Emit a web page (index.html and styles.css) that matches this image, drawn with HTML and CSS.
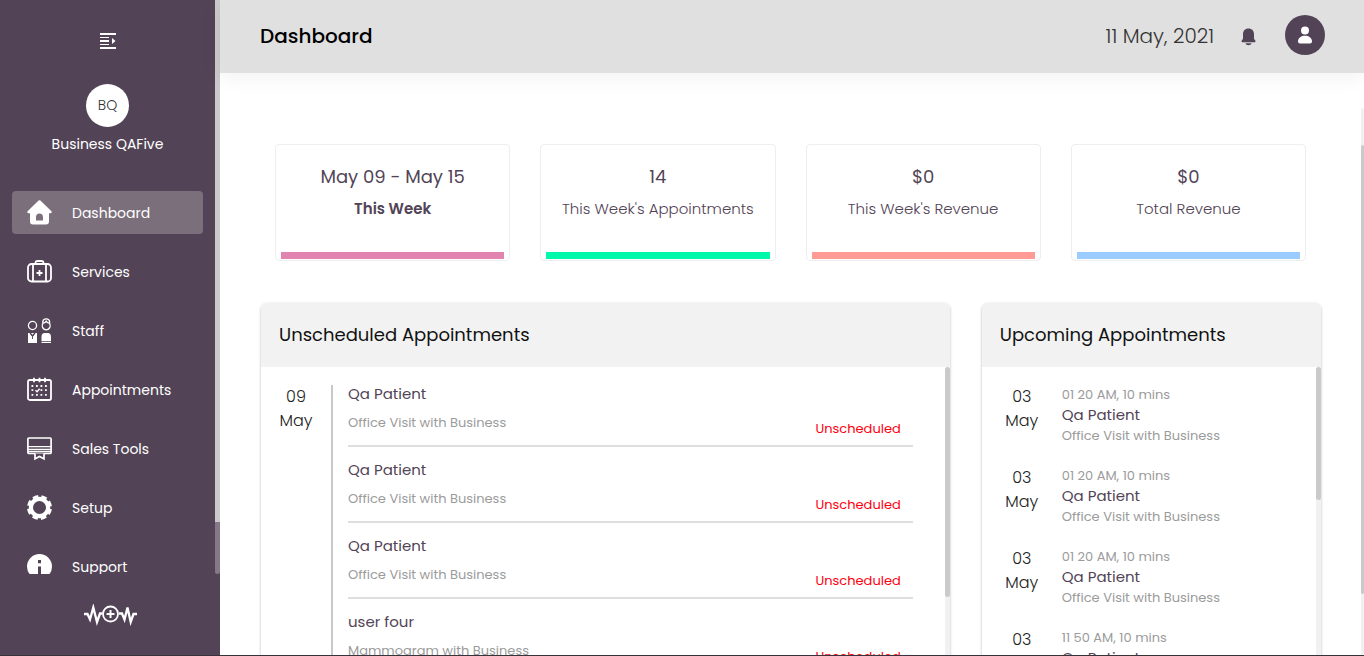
FILE: index.html
```html
<!DOCTYPE html>
<html lang="en">
<head>
<meta charset="utf-8">
<meta name="viewport" content="width=device-width, initial-scale=1">
<title>Dashboard</title>
<link rel="stylesheet" href="styles.css">
</head>
<body>
<div class="app">
  <aside class="sidebar">
    <div class="sidebar-scroll">
      <div class="sidebar-content">
        <button class="icon-button" type="button" aria-label="Toggle menu">
          <svg width="16" height="16" viewBox="0 0 16 16" fill="#fff"><path d="M0 0h16v2H0zM0 4h9v1H0zM0 7h9v2H0zM0 11h9v1H0zM0 14h16v2H0zM12 5l3.500 3L12 11z"/></svg>
        </button>
        <div class="initials">BQ</div>
        <div class="business">Business QAFive</div>
        <nav class="menu">
          <a class="menu-item active" href="#"><svg width="25" height="25" viewBox="0 0 25 25" fill="#fff"><path fill-rule="evenodd" d="M11.600.6q.9-.8 1.800 0l11 10.700q1 1.700-1 2H22v8.200q0 3-3 3H6q-3 0-3-3v-8.200H1.600q-2-.3-1-2zM9 20.500h7V17c0-4.600-7-4.600-7 0z"/></svg><span>Dashboard</span></a>
          <a class="menu-item" href="#"><svg width="25" height="25" viewBox="0 0 25 25" fill="none" stroke="#fff" stroke-width="1.800"><rect x="1" y="5" width="23" height="17.500" rx="3.500"/><path d="M6 5v17.500M19 5v17.500M8.500 5V4q0-2 2-2h4q2 0 2 2v1M12.500 11v6M9.500 14h6"/></svg><span>Services</span></a>
          <a class="menu-item" href="#"><svg width="25" height="25" viewBox="0 0 25 25" fill="none" stroke="#fff" stroke-width="1.300"><circle cx="5.500" cy="7.500" r="4.100"/><path d="M15.800 5.500V3.800Q16 .8 19.200.8t3.400 3v1.700q1 2 .4 3.500-1.200 2.800-3.800 2.800T15.400 9q-.6-1.500.4-3.500zM16 5.200q1.700.2 3.200-2 1.500 2.200 3.200 2"/><path fill="#fff" stroke="none" fill-rule="evenodd" d="M1 15h1.500l3 4 3-4H10v10H1zM4 15l1.500 1.700L7 15zM14.500 23.200V19q0-4 3.200-4h3q3.300 0 3.300 4v4.200zM14.500 24H24v1h-9.500z"/><path stroke="#524456" stroke-width=".9" d="M3 15l2.500 3.500L8 15M5.500 18.500V21"/></svg><span>Staff</span></a>
          <a class="menu-item" href="#"><svg width="25" height="25" viewBox="0 0 25 25" fill="none" stroke="#fff"><rect x="1" y="3" width="23" height="20" rx="1.800" stroke-width="1.800"/><path stroke-width="1.800" d="M7 .8v4.400M12.500.8v4.400M18 .8v4.400"/><path stroke-width="1.800" stroke-dasharray="1.800 2.700" d="M4.500 9H21M4.500 13.200H7M13.500 13.200H21M4.500 17.800H21"/><path stroke-width="1.400" d="M8.500 13.200l1.600 1.600 2.500-3"/></svg><span>Appointments</span></a>
          <a class="menu-item" href="#"><svg width="25" height="25" viewBox="0 0 25 25" fill="none" stroke="#fff" stroke-width="1.700"><rect x=".9" y="2" width="23.200" height="15.500" rx="1"/><path d="M1 10.700h23M1 13.300h23M1 15.500h23" stroke-width="1.300"/><path fill="#524456" d="M8 17.500v5.300l4.500-2.300 4.500 2.300v-5.300"/></svg><span>Sales Tools</span></a>
          <a class="menu-item" href="#"><svg width="25" height="25" viewBox="0 0 25 25" fill="none" stroke="#fff"><circle cx="12.500" cy="12.500" r="8.600" stroke-width="4.200"/><circle cx="12.500" cy="12.500" r="10.900" stroke-width="3.200" stroke-dasharray="5.400 3.161" stroke-dashoffset="-1.580"/></svg><span>Setup</span></a>
          <a class="menu-item" href="#"><svg width="25" height="25" viewBox="0 0 25 25"><circle cx="12.500" cy="12.500" r="12.500" fill="#fff"/><path fill="#524456" d="M11 6h3v3.200h-3zM11 12.500h3V20h-3z"/></svg><span>Support</span></a>
        </nav>
      </div>
      <div class="track track-side"><div class="thumb thumb-side"></div></div>
    </div>
    <div class="brand">
      <svg width="53" height="22" viewBox="0 0 53 22" fill="none" stroke="#fff"><path stroke-width="2.300" stroke-linejoin="miter" stroke-miterlimit="4" d="M0 10h3.500L6 15.500 9.300 3.500 13 18 16 9.500h2.500M35 9.500h3l2.500 6L43.500 3.500 46.700 18 49.500 10H53"/><circle cx="26.500" cy="10" r="7.500" stroke-width="1.800"/><path stroke-width="2" d="M26.500 6v8M22.500 10h8"/></svg>
    </div>
  </aside>
  <div class="page">
    <header class="topbar">
      <h1>Dashboard</h1>
      <time class="today" datetime="2021-05-11">11 May, 2021</time>
      <button class="icon-button bell" type="button" aria-label="Notifications">
        <svg width="15" height="18" viewBox="0 0 15 18" fill="#524456"><path d="M7.500.5c3.500 0 5.500 2.400 5.500 5.700v4.300c0 1 1.500 1.500 1.500 2.700 0 .8-.5 1-1 1h-12c-.5 0-1-.2-1-1C.5 12 2 11.500 2 10.500V6.200C2 2.900 4 .5 7.500.5zM4.300 15.300h6.400c-.8 2.600-5.600 2.600-6.400 0z"/></svg>
      </button>
      <button class="icon-button user" type="button" aria-label="Account">
        <svg width="14" height="18" viewBox="0 0 14 18" fill="#fff"><circle cx="7" cy="4.500" r="4"/><path d="M0 15.500C0 7.800 14 7.800 14 15.500q0 2-2 2H2q-2 0-2-2z"/></svg>
      </button>
    </header>
    <div class="body">
      <main class="content">
        <section class="cards">
          <article class="card"><h2>May 09 - May 15</h2><p class="strong">This Week</p><div class="bar pink"></div></article>
          <article class="card"><h2>14</h2><p>This Week's Appointments</p><div class="bar green"></div></article>
          <article class="card"><h2>$0</h2><p>This Week's Revenue</p><div class="bar coral"></div></article>
          <article class="card"><h2>$0</h2><p>Total Revenue</p><div class="bar blue"></div></article>
        </section>
        <div class="panels">
          <section class="panel">
            <h2 class="panel-title">Unscheduled Appointments</h2>
            <div class="panel-body">
              <div class="day">
                <div class="date">09<br>May</div>
                <ul class="visits">
                  <li class="visit"><div><h3>Qa Patient</h3><p>Office Visit with Business</p></div><span class="status">Unscheduled</span></li>
                  <li class="visit"><div><h3>Qa Patient</h3><p>Office Visit with Business</p></div><span class="status">Unscheduled</span></li>
                  <li class="visit"><div><h3>Qa Patient</h3><p>Office Visit with Business</p></div><span class="status">Unscheduled</span></li>
                  <li class="visit"><div><h3>user four</h3><p>Mammogram with Business</p></div><span class="status">Unscheduled</span></li>
                </ul>
              </div>
              <div class="track"><div class="thumb thumb-list"></div></div>
            </div>
          </section>
          <section class="panel">
            <h2 class="panel-title">Upcoming Appointments</h2>
            <div class="panel-body">
              <ul class="upcoming">
                <li><div class="date">03<br>May</div><div><p>01 20 AM, 10 mins</p><h3>Qa Patient</h3><p>Office Visit with Business</p></div></li>
                <li><div class="date">03<br>May</div><div><p>01 20 AM, 10 mins</p><h3>Qa Patient</h3><p>Office Visit with Business</p></div></li>
                <li><div class="date">03<br>May</div><div><p>01 20 AM, 10 mins</p><h3>Qa Patient</h3><p>Office Visit with Business</p></div></li>
                <li><div class="date">03<br>May</div><div><p>11 50 AM, 10 mins</p><h3>Qa Patient</h3><p>Office Visit with Business</p></div></li>
              </ul>
              <div class="track"><div class="thumb thumb-upcoming"></div></div>
            </div>
          </section>
        </div>
      </main>
      <div class="track track-page"><div class="thumb thumb-page"></div></div>
    </div>
  </div>
</div>
</body>
</html>
```

FILE: styles.css
```css
* { box-sizing: border-box; }
body { margin: 0; background: #fff; color: #524456; font-family: Poppins, Inter, "Open Sans", sans-serif; }
h1, h2, h3, p, ul { margin: 0; padding: 0; font-weight: 400; }
ul { list-style: none; }
svg { display: block; flex: none; }

.app { display: flex; height: 100vh; overflow: hidden; border-bottom: 1px solid #38333a; }
.icon-button { display: flex; align-items: center; justify-content: center; padding: 0; border: 0; background: none; cursor: pointer; }

.track { flex: none; width: 5px; background: #f1f1f1; border-radius: 3px; }
.thumb { background: #cacaca; border-radius: 3px; }

.sidebar { flex: none; display: flex; flex-direction: column; width: 220px; background: #524456; color: #fff; }
.sidebar-scroll { flex: 1; min-height: 0; display: flex; overflow: hidden; }
.sidebar-content { flex: 1; display: flex; flex-direction: column; align-items: center; padding: 33px 12px 0; }
.track-side { background: #857988; }
.thumb-side { height: 91%; border-radius: 0; }
.initials { display: flex; align-items: center; justify-content: center; width: 43px; height: 43px; margin-top: 35px; border-radius: 50%; background: #fff; color: #333; font-size: 14px; font-weight: 300; flex: none; }
.business { margin-top: 7px; font-size: 14px; line-height: 20px; }
.menu { align-self: stretch; display: flex; flex-direction: column; gap: 16px; margin-top: 37px; }
.menu-item { display: flex; align-items: center; gap: 20px; height: 43px; padding: 0 15px; border-radius: 4px; color: #fff; font-size: 14px; text-decoration: none; flex: none; }
.menu-item span { padding-top: 2px; }
.menu-item.active { background: #7b6f7c; }
.brand { flex: none; display: flex; align-items: center; justify-content: center; height: 81px; }

.page { flex: 1; min-width: 0; display: flex; flex-direction: column; }
.topbar { flex: none; display: flex; align-items: center; height: 73px; padding: 0 39px 3px 40px; background: #e0e0e0; box-shadow: 0 4px 20px rgba(0, 0, 0, .06); }
.topbar h1 { flex: 1; padding-top: 2px; color: #000; font-size: 20px; font-weight: 500; }
.today { padding-top: 2px; font-size: 20px; font-weight: 300; color: #333; }
.bell { margin: 4px 29px 0 27px; }
.user { width: 40px; height: 40px; border-radius: 50%; background: #524456; }

.body { flex: 1; min-height: 0; display: flex; padding-top: 35px; }
.content { flex: 1; min-width: 0; overflow: hidden; padding: 36px 40px 0 41px; }
.track-page { width: 3px; padding-top: 37px; }
.thumb-page { height: 88%; }

.cards { display: grid; grid-template-columns: repeat(4, 1fr); gap: 30px; padding: 0 15px 0 14px; }
.card { display: flex; flex-direction: column; min-height: 117px; padding: 18px 5px 1px; border: 1px solid #eee; border-radius: 4px; text-align: center; }
.card h2 { font-size: 18px; line-height: 28px; }
.card p { margin-top: 6px; font-size: 15px; line-height: 24px; font-weight: 300; }
.card .strong { font-weight: 600; }
.bar { height: 7px; margin-top: auto; }
.pink { background: #e284b0; }
.green { background: #00f8ab; }
.coral { background: #ff9a94; }
.blue { background: #9accff; }

.panels { display: grid; grid-template-columns: 67fr 33fr; gap: 32px; margin-top: 42px; }
.panel { min-width: 0; height: 420px; display: flex; flex-direction: column; overflow: hidden; border-radius: 6px; box-shadow: 0 1px 3px rgba(0, 0, 0, .28); }
.panel-title { flex: none; padding: 0 18px; background: #f2f2f2; color: #111; font-size: 18px; line-height: 64px; }
.panel-body { flex: 1; min-height: 0; display: flex; }
.panel h3 { font-size: 15px; }
.panel p { color: #9b9b9b; font-size: 13px; }
.date { flex: none; color: #222; font-size: 16px; font-weight: 300; line-height: 24px; text-align: center; }

.day { flex: 1; min-width: 0; display: flex; padding: 18px 32px 0 0; }
.day .date { width: 70px; }
.visits { flex: 1; padding-left: 15px; border-left: 2px solid #c8c8c8; }
.visit { display: flex; justify-content: space-between; align-items: flex-end; margin-bottom: 14px; padding-right: 12px; border-bottom: 2px solid #dedede; }
.visit h3 { line-height: 18px; }
.visit p { margin: 11px 0 13px; line-height: 18px; }
.status { margin-bottom: 7px; color: #ff0010; font-size: 13px; line-height: 18px; }
.thumb-list { height: 230px; }

.upcoming { flex: 1; min-width: 0; display: flex; flex-direction: column; gap: 21px; padding-top: 18px; }
.upcoming li { display: flex; line-height: 20px; height: 60px; }
.upcoming .date { width: 80px; }
.upcoming h3 { margin-bottom: 1px; }
.thumb-upcoming { height: 133px; }
```
